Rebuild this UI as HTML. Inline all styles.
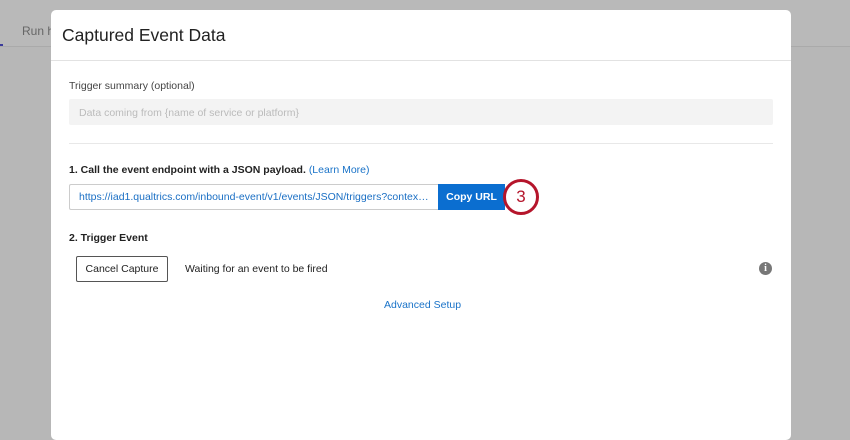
<!DOCTYPE html>
<html><head><style>
body{margin:0;width:850px;height:425px;background:#b7b7b7;font-family:"Liberation Sans",sans-serif;position:relative;overflow:hidden}
.bgtop{position:absolute;left:0;top:0;width:850px;height:46px;background:#b9b9b9;border-bottom:1px solid #aaa}
.t{position:absolute;white-space:nowrap}
.modal{position:absolute;left:51px;top:10px;width:740px;height:430px;background:#fff;border-radius:5px}
</style></head><body>
<div class="bgtop"></div>
<div class="t" style="left:22px;top:24px;font-size:12px;color:#666">Run hi</div>
<div style="position:absolute;left:0;top:44px;width:3px;height:2px;background:#3b3b9b"></div>
<div class="modal">
<div class="t" style="left:11px;top:15px;font-size:17.5px;color:#222">Captured Event Data</div>
<div style="position:absolute;left:0;top:50px;width:740px;height:1px;background:#e2e2e2"></div>
<div class="t" style="left:18px;top:70px;font-size:10.5px;color:#444">Trigger summary (optional)</div>
<div style="position:absolute;left:18px;top:89px;width:704px;height:26px;background:#f3f3f3;border-radius:2px"></div>
<div class="t" style="left:28px;top:97px;font-size:10.5px;color:#bbb">Data coming from {name of service or platform}</div>
<div style="position:absolute;left:18px;top:133px;width:704px;height:1px;background:#e8e8e8"></div>
<div class="t" style="left:18px;top:154px;font-size:10.5px;color:#222"><b>1. Call the event endpoint with a JSON payload.</b> <span style="color:#1a73c8">(Learn More)</span></div>
<div style="position:absolute;left:18px;top:174px;width:368px;height:24px;border:1px solid #ccc;border-right:none;border-radius:2px 0 0 2px"></div>
<div class="t" style="left:28px;top:181px;width:352px;overflow:hidden;text-overflow:ellipsis;font-size:10.5px;color:#1a6fc4">https://iad1.qualtrics.com/inbound-event/v1/events/JSON/triggers?contextId=abc</div>
<div style="position:absolute;left:387px;top:174px;width:67px;height:26px;background:#0b6ed0;color:#fff;font-size:10.5px;font-weight:bold;line-height:26px;text-align:center">Copy URL</div>
<div style="position:absolute;left:452px;top:169px;width:30px;height:30px;border:3px solid #b5152b;border-radius:50%;background:#fff;color:#b5152b;font-size:17px;line-height:30px;text-align:center">3</div>
<div class="t" style="left:18px;top:222px;font-size:10.5px;font-weight:bold;color:#222">2. Trigger Event</div>
<div style="position:absolute;left:25px;top:246px;width:90px;height:24px;border:1px solid #555;border-radius:2px;font-size:10.5px;color:#222;line-height:24px;text-align:center">Cancel Capture</div>
<div class="t" style="left:134px;top:253px;font-size:10.5px;color:#222">Waiting for an event to be fired</div>
<div style="position:absolute;left:708px;top:252px;width:13px;height:13px;border-radius:50%;background:#777;color:#fff;font-size:10px;font-weight:bold;line-height:13px;text-align:center;font-family:'Liberation Serif',serif">i</div>
<div class="t" style="left:333px;top:289px;font-size:10.5px;color:#1a73c8">Advanced Setup</div>
</div>
</body></html>
